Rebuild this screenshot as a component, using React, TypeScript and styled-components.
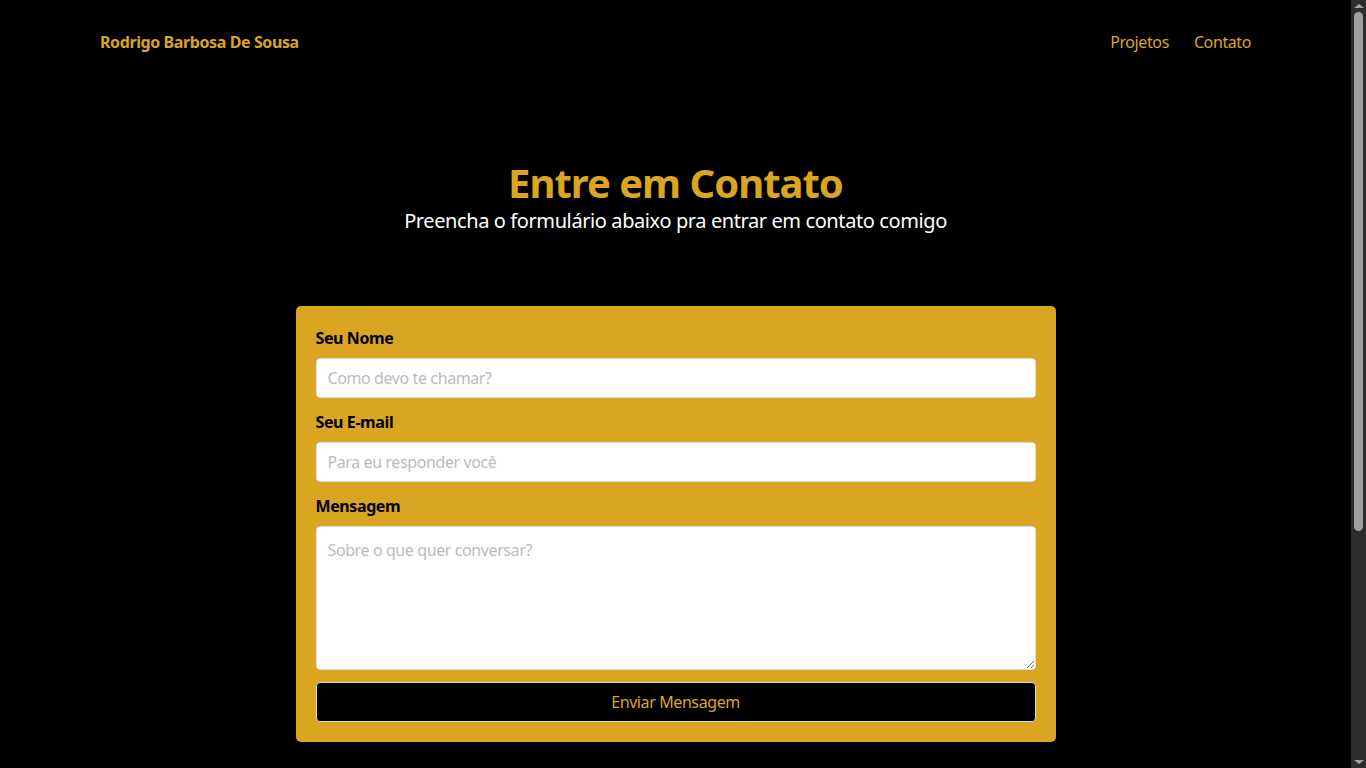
import React from "react";
import styled, { createGlobalStyle } from "styled-components";

const GOLD = "#daa520";

const Global = createGlobalStyle`
  html { color-scheme: dark; }
  * { box-sizing: border-box; }
  body {
    margin: 0;
    background: #000;
    font-family: "Noto Sans", "Open Sans", sans-serif;
    letter-spacing: -0.025em;
    color: #fff;
  }
`;

const Page = styled.div`
  margin-right: 15px;
`;

const Header = styled.header`
  height: 84px;
  padding: 0 100px;
  display: flex;
  align-items: center;
  justify-content: space-between;
`;

const Brand = styled.a`
  color: ${GOLD};
  font-weight: 700;
  font-size: 16px;
  text-decoration: none;
`;

const Nav = styled.nav`
  display: flex;
  gap: 25px;
`;

const NavLink = styled.a`
  color: ${GOLD};
  font-size: 16px;
  text-decoration: none;
`;

const Main = styled.main`
  padding: 75px 0 355px;
  display: flex;
  flex-direction: column;
  align-items: center;
`;

const Title = styled.h1`
  margin: 0;
  color: ${GOLD};
  font-size: 40px;
  line-height: 48px;
  font-weight: 700;
  letter-spacing: -0.025em;
`;

const Subtitle = styled.p`
  margin: 2px 0 0;
  font-size: 20px;
  line-height: 24px;
  color: #fff;
`;

const Card = styled.form`
  margin-top: 73px;
  width: 760px;
  background: ${GOLD};
  border-radius: 5px;
  padding: 20px;
  display: flex;
  flex-direction: column;
`;

const Label = styled.label`
  color: #000;
  font-weight: 700;
  font-size: 16px;
  line-height: 24px;
  margin-bottom: 8px;
`;

const fieldCss = `
  width: 100%;
  border: 1px solid #ddd;
  border-radius: 4px;
  background: #fff;
  color: #000;
  font-family: inherit;
  letter-spacing: inherit;
  font-size: 16px;
  padding: 0 11px;
  outline: none;
  &::placeholder { color: #bbb; }
`;

const Input = styled.input`
  ${fieldCss}
  height: 40px;
  margin-bottom: 12px;
`;

const TextArea = styled.textarea`
  ${fieldCss}
  height: 144px;
  padding-top: 12px;
  margin-bottom: 12px;
  color-scheme: light;
`;

const Button = styled.button`
  height: 40px;
  background: #000;
  color: ${GOLD};
  border: 1px solid #ddd;
  border-radius: 4px;
  font-family: inherit;
  letter-spacing: inherit;
  font-size: 16px;
  cursor: pointer;
`;

/* browser scrollbar as seen in the reference, drawn over the page edge */
const ScrollTrack = styled.div`
  position: fixed;
  top: 0;
  right: 0;
  width: 15px;
  height: 100vh;
  background: #2c2c2c;
  display: flex;
  flex-direction: column;
  align-items: center;
  justify-content: space-between;
  padding: 4px 0;
`;

const Arrow = styled.div<{ $down?: boolean }>`
  width: 0;
  height: 0;
  border-left: 5px solid transparent;
  border-right: 5px solid transparent;
  ${(p) => (p.$down ? "border-top: 4px solid #a3a3a3;" : "border-bottom: 4px solid #a3a3a3;")}
`;

const Thumb = styled.div`
  position: absolute;
  top: 12px;
  left: 3px;
  width: 9px;
  height: 519px;
  border-radius: 5px;
  background: #9f9f9f;
`;

export default function App() {
  return (
    <>
      <Global />
      <Page>
        <Header>
          <Brand href="#">Rodrigo Barbosa De Sousa</Brand>
          <Nav>
            <NavLink href="#">Projetos</NavLink>
            <NavLink href="#">Contato</NavLink>
          </Nav>
        </Header>
        <Main>
          <Title>Entre em Contato</Title>
          <Subtitle>Preencha o formulário abaixo pra entrar em contato comigo</Subtitle>
          <Card onSubmit={(e) => e.preventDefault()}>
            <Label htmlFor="nome">Seu Nome</Label>
            <Input id="nome" placeholder="Como devo te chamar?" />
            <Label htmlFor="email">Seu E-mail</Label>
            <Input id="email" placeholder="Para eu responder você" />
            <Label htmlFor="msg">Mensagem</Label>
            <TextArea id="msg" placeholder="Sobre o que quer conversar?" />
            <Button type="submit">Enviar Mensagem</Button>
          </Card>
        </Main>
      </Page>
      <ScrollTrack aria-hidden="true">
        <Arrow />
        <Thumb />
        <Arrow $down />
      </ScrollTrack>
    </>
  );
}
